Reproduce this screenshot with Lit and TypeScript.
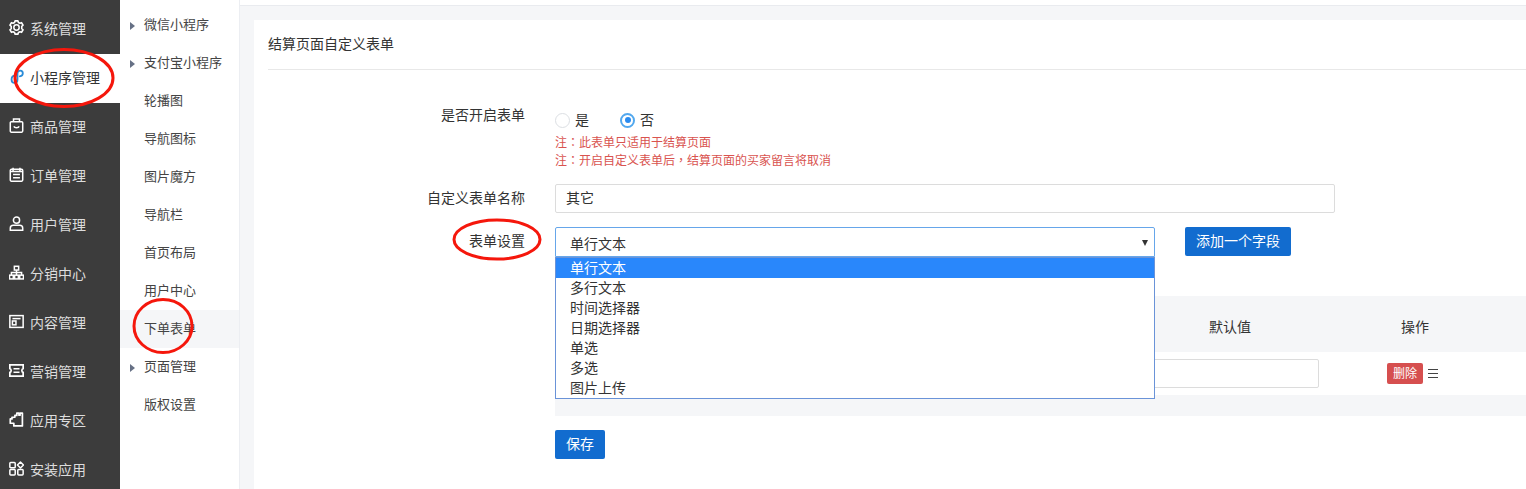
import { LitElement, html, css, svg } from "lit";
import { customElement } from "lit/decorators.js";

const ICONS: Record<string, unknown> = {
  gear: svg`<circle cx="7" cy="7" r="2.500"/><path d="M5.700.8h2.600l.5 1.500 1.400.7 1.500-.5 1.400 2.400-1.200 1v2.200l1.200 1-1.400 2.400-1.500-.5-1.400.7-.5 1.500H5.700l-.5-1.500-1.400-.7-1.500.5L.9 9.100l1.200-1V5.900L.9 4.900l1.400-2.400 1.500.5 1.400-.7z" stroke-linejoin="round" stroke-width="1.500"/>`,
  mini: svg`<path d="M5.600 6.200C3.600 6.200 2.400 7.700 2.400 9.800c0 1.900 1.200 3.200 2.700 3.200 1.700 0 2.800-1.400 2.800-3.200V4.400C7.900 2.700 9 1.500 10.500 1.500c1.400 0 2.400 1.100 2.400 2.500 0 1.600-1.100 2.700-2.800 2.900" stroke-width="1.700" stroke-linecap="round"/>`,
  bag: svg`<rect x="1.200" y="3.500" width="11.600" height="9.700" rx="1"/><path d="M4.200 3.500V1h5.600v2.500"/><path d="M4.500 7.800c.8 1.700 4.200 1.700 5 0"/>`,
  order: svg`<rect x="1.200" y="2.200" width="11.600" height="11" rx="1"/><path d="M3.800.6v3M10.200.6v3M1.200 4.200h11.600M3.800 7h6.400M3.800 10h6.400"/>`,
  user: svg`<circle cx="7" cy="3.900" r="2.900"/><path d="M1.200 13.200v-1.800c0-1.500 1.300-2.700 2.800-2.700h6c1.500 0 2.800 1.200 2.800 2.700v1.800z"/>`,
  org: svg`<rect x="5" y="1.200" width="4" height="3.500"/><rect x=".5" y="9.500" width="3.500" height="3.500"/><rect x="5.250" y="9.500" width="3.500" height="3.500"/><rect x="10" y="9.500" width="3.500" height="3.500"/><path d="M2.250 9.500V7h9.500v2.500M7 4.700v4.800"/>`,
  content: svg`<rect x=".8" y="1.500" width="12.400" height="11"/><path d="M3.200 4.300h7.600"/><rect x="3.200" y="6.500" width="3.300" height="3.600"/>`,
  ticket: svg`<path d="M.8 1.800h12.400v3.400c-1.600.3-1.600 3.300 0 3.600v3.400H.8V8.800c1.600-.3 1.600-3.300 0-3.600z" stroke-width="1.600"/><path d="M4.200 5.300h5.600M4.200 8.700h5.600"/>`,
  puzzle: svg`<path d="M5.500 3.200h1.800V1h2v2h1V1h2.200v12H4.500v-2.500H1.200V6.500h1.600V5l2.700-.2z" stroke-linejoin="round" stroke-width="1.600"/>`,
  apps: svg`<rect x=".8" y="1.300" width="5" height="5" rx=".8"/><rect x=".8" y="8" width="5" height="5" rx=".8"/><rect x="8.200" y="8" width="5" height="5" rx=".8"/><path d="M10.700 1l2.800 2.800-2.800 2.800-2.800-2.800z" stroke-linejoin="round"/>`,
};

const MAIN = [
  ["gear", "系统管理"], ["mini", "小程序管理"], ["bag", "商品管理"], ["order", "订单管理"], ["user", "用户管理"],
  ["org", "分销中心"], ["content", "内容管理"], ["ticket", "营销管理"], ["puzzle", "应用专区"], ["apps", "安装应用"],
];
const SUB: [string, boolean][] = [
  ["微信小程序", true], ["支付宝小程序", true], ["轮播图", false], ["导航图标", false], ["图片魔方", false], ["导航栏", false],
  ["首页布局", false], ["用户中心", false], ["下单表单", false], ["页面管理", true], ["版权设置", false],
];
const OPTIONS = ["单行文本", "多行文本", "时间选择器", "日期选择器", "单选", "多选", "图片上传"];

@customElement("app-root")
export class AppRoot extends LitElement {
  static styles = css`
    :host { display: block; width: 1526px; height: 489px; overflow: hidden; position: relative; background: #f5f6f8; color: #333; font: 14px "Noto Sans CJK SC", "Liberation Sans", sans-serif; }
    * { box-sizing: border-box; }
    .layout { display: flex; height: 489px; }
    .side { width: 120px; flex: none; background: #3c3c3c; padding-top: 5px; color: #ddd; }
    .side-item { height: 49px; display: flex; align-items: center; gap: 6px; padding: 0 0 4px 9px; white-space: nowrap; }
    .side-item.active { background: #fff; color: #333; }
    .side-item svg { width: 15px; height: 15px; fill: none; stroke: #fff; stroke-width: 1.400; flex: none; }
    .side-item.active svg { stroke: #2a8cd8; }
    .sub { width: 120px; flex: none; background: #fff; border-right: 1px solid #eceef2; padding-top: 6px; font-size: 13px; color: #444; }
    .sub-item { height: 38px; display: flex; align-items: center; padding: 0 0 4px 24px; position: relative; }
    .sub-item.active { background: #f5f6f8; }
    .caret { position: absolute; left: 10px; top: 16px; width: 0; height: 0; border-left: 5px solid #667085; border-top: 4px solid transparent; border-bottom: 4px solid transparent; }
    .main { flex: 1; min-width: 0; display: flex; flex-direction: column; }
    .topbar { height: 6px; flex: none; background: #fff; border-bottom: 1px solid #e9ebef; }
    .card { flex: 1; margin: 14px 0 0 14px; background: #fff; padding: 0 0 0 14px; }
    .title { height: 50px; display: flex; align-items: center; padding-bottom: 3px; border-bottom: 1px solid #e8e8e8; }
    .form { position: relative; }
    .row { display: flex; }
    .label { width: 257px; flex: none; text-align: right; }
    .field { margin-left: 30px; flex: 1; min-width: 0; }
    .row-open { padding-top: 35px; height: 114px; }
    .row-open .label { line-height: 18px; }
    .radios { display: flex; align-items: center; height: 24px; margin-top: 3px; line-height: 20px; }
    .radios b { font-weight: 400; position: relative; top: -1px; }
    .radio { width: 15px; height: 15px; border-radius: 50%; border: 1px solid #dcdfe3; margin-right: 5px; background: #fff; }
    .radio.on { border: 2px solid #52a8ee; position: relative; margin-left: 31px; }
    .radio.on::after { content: ""; position: absolute; left: 2.500px; top: 2.500px; width: 6px; height: 6px; border-radius: 50%; background: #2a8cf0; }
    .note { font-size: 12px; line-height: 18px; height: 18px; color: #d9534f; padding-bottom: 2px; }
    .note i { font-style: normal; font-family: "Noto Sans CJK TC", sans-serif; }
    .notes { margin-top: 1px; }
    .input { height: 29px; border: 1px solid #dcdcdc; border-radius: 2px; background: #fff; display: flex; align-items: center; padding: 0 0 3px 10px; }
    .row-name { height: 43px; }
    .row-name .input { width: 780px; }
    .row-name .label { line-height: 26px; }
    .row-set .label { line-height: 26px; }
    .row-set .controls { display: flex; gap: 30px; }
    .select { width: 600px; height: 30px; border: 1px solid #66a6ea; border-radius: 2px 2px 0 0; display: flex; align-items: center; padding: 1px 0 0 14px; position: relative; }
    .select::after { content: ""; position: absolute; right: 6px; top: 12px; border-top: 6px solid #333; border-left: 3.500px solid transparent; border-right: 3.500px solid transparent; }
    .menu { position: absolute; left: 287px; top: 187px; width: 600px; height: 142px; background: #fff; border: 1px solid #6a93d8; z-index: 2; }
    .opt { height: 20px; line-height: 18px; padding-left: 14px; }
    .opt.sel { background: #2987fb; color: #fff; }
    .btn { background: #126ccf; color: #fff; border-radius: 2px; height: 29px; display: flex; align-items: center; justify-content: center; padding-bottom: 3px; }
    .btn.add { width: 106px; }
    .table { margin: 39px 0 0 287px; background: #f5f6f8; }
    .grid { display: grid; grid-template-columns: 582px 186px 184px 1fr; align-items: center; }
    .thead { height: 56px; padding-top: 4px; }
    .th { text-align: center; }
    .tbody { height: 43px; background: #fff; }
    .cell-in { margin-left: 2px; width: 180px; height: 29px; border: 1px solid #dcdcdc; border-radius: 2px; }
    .ops { display: flex; align-items: center; margin-left: 64px; gap: 5px; }
    .del { width: 36px; height: 21px; background: #d64f4f; color: #fff; font-size: 12px; border-radius: 2px; display: flex; align-items: center; justify-content: center; padding-bottom: 2px; }
    .bars { width: 10px; height: 9px; border-top: 1px solid #444; border-bottom: 1px solid #444; position: relative; }
    .bars::after { content: ""; position: absolute; left: 0; right: 0; top: 3px; height: 1px; background: #444; }
    .tfoot { height: 21px; }
    .save { margin: 14px 0 0 287px; width: 50px; }
    .marks { position: absolute; left: 0; top: 0; width: 1526px; height: 489px; pointer-events: none; z-index: 5; fill: none; stroke: #f5170c; stroke-width: 3; }
  `;

  render() {
    return html`
      <div class="layout">
        <nav class="side">
          ${MAIN.map(([ic, t], i) => html`<div class="side-item ${i === 1 ? "active" : ""}"><svg viewBox="0 0 14 14">${ICONS[ic]}</svg><span>${t}</span></div>`)}
        </nav>
        <nav class="sub">
          ${SUB.map(([t, c], i) => html`<div class="sub-item ${i === 8 ? "active" : ""}">${c ? html`<i class="caret"></i>` : ""}${t}</div>`)}
        </nav>
        <div class="main">
          <div class="topbar"></div>
          <section class="card">
            <div class="title">结算页面自定义表单</div>
            <div class="form">
              <div class="row row-open">
                <div class="label">是否开启表单</div>
                <div class="field">
                  <div class="radios"><span class="radio"></span><b>是</b><span class="radio on"></span><b>否</b></div>
                  <div class="notes">
                    <div class="note">注<i>：</i>此表单只适用于结算页面</div>
                    <div class="note">注<i>：</i>开启自定义表单后<i>，</i>结算页面的买家留言将取消</div>
                  </div>
                </div>
              </div>
              <div class="row row-name">
                <div class="label">自定义表单名称</div>
                <div class="field"><div class="input">其它</div></div>
              </div>
              <div class="row row-set">
                <div class="label">表单设置</div>
                <div class="field controls">
                  <div class="select">单行文本</div>
                  <div class="btn add">添加一个字段</div>
                </div>
              </div>
              <div class="menu">
                ${OPTIONS.map((o, i) => html`<div class="opt ${i === 0 ? "sel" : ""}">${o}</div>`)}
              </div>
              <div class="table">
                <div class="grid thead"><span></span><span class="th">默认值</span><span class="th">操作</span></div>
                <div class="grid tbody"><span></span><div class="cell-in"></div><div class="ops"><span class="del">删除</span><span class="bars"></span></div></div>
                <div class="tfoot"></div>
              </div>
              <div class="btn save">保存</div>
            </div>
          </section>
        </div>
      </div>
      <svg class="marks" viewBox="0 0 1526 489">
        <ellipse cx="64" cy="78" rx="49" ry="28.500"/>
        <ellipse cx="497" cy="239.500" rx="43" ry="19.500"/>
        <ellipse cx="163" cy="326" rx="29" ry="26.500"/>
      </svg>
    `;
  }
}
